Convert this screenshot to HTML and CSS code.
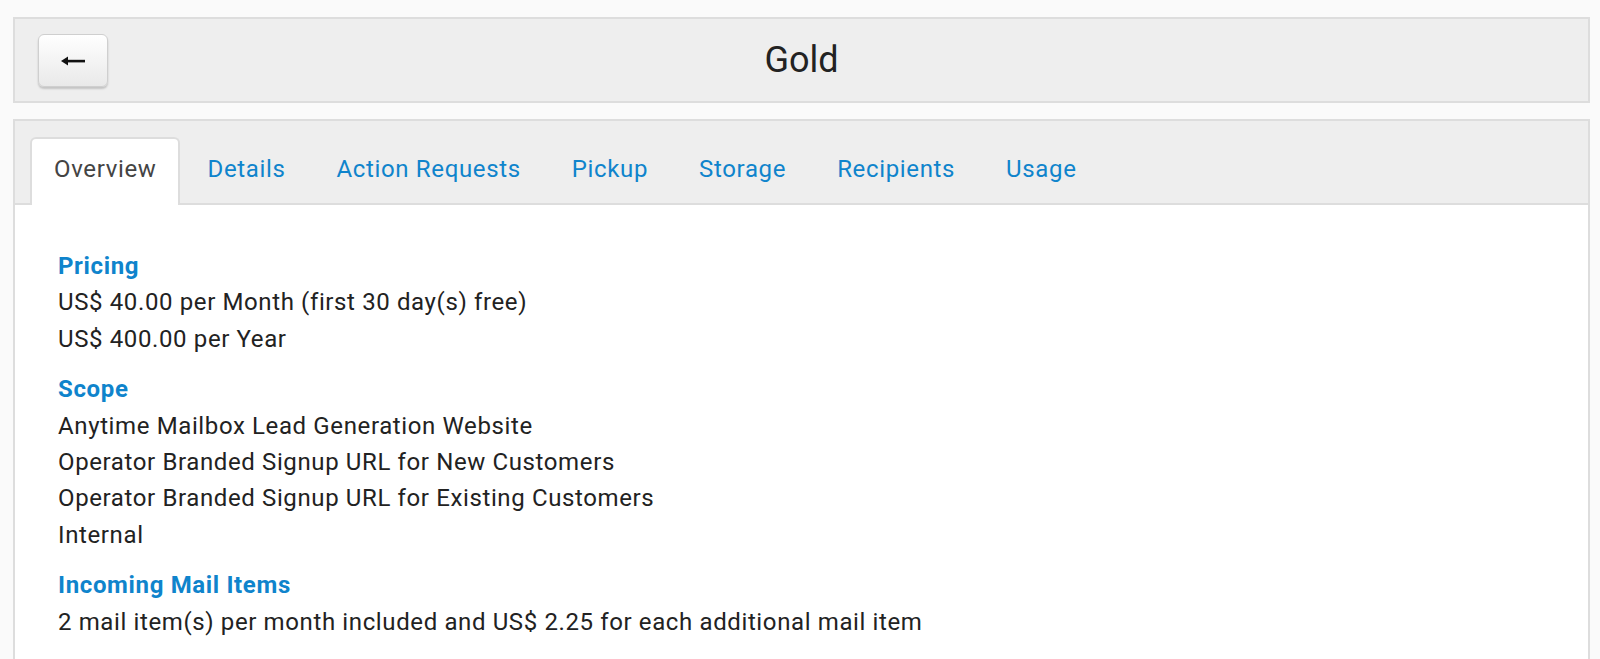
FILE: index.html
```html
<!DOCTYPE html>
<html>
<head>
<meta charset="utf-8">
<link rel="stylesheet" href="styles.css">
</head>
<body>
<div class="page">
  <div class="header">
    <button class="back-btn" type="button" aria-label="Back">
      <svg width="26" height="12" viewBox="0 0 26 12">
        <path d="M1 6 L8 1.5 L8 10.5 Z" fill="#111"/>
        <rect x="6" y="4.8" width="19" height="2.6" fill="#111"/>
      </svg>
    </button>
    <h1 class="title">Gold</h1>
    <div class="spacer"></div>
  </div>
  <div class="panel">
    <ul class="tabs">
      <li class="tab active">Overview</li>
      <li class="tab">Details</li>
      <li class="tab">Action Requests</li>
      <li class="tab">Pickup</li>
      <li class="tab">Storage</li>
      <li class="tab">Recipients</li>
      <li class="tab">Usage</li>
    </ul>
    <div class="content">
      <div class="section">
        <div class="label">Pricing</div>
        <div class="line">US$ 40.00 per Month (first 30 day(s) free)</div>
        <div class="line">US$ 400.00 per Year</div>
      </div>
      <div class="section">
        <div class="label">Scope</div>
        <div class="line">Anytime Mailbox Lead Generation Website</div>
        <div class="line">Operator Branded Signup URL for New Customers</div>
        <div class="line">Operator Branded Signup URL for Existing Customers</div>
        <div class="line">Internal</div>
      </div>
      <div class="section">
        <div class="label">Incoming Mail Items</div>
        <div class="line">2 mail item(s) per month included and US$ 2.25 for each additional mail item</div>
      </div>
    </div>
  </div>
</div>
</body>
</html>
```

FILE: styles.css
```css
html, body {
  margin: 0;
  padding: 0;
  background: #fafafa;
  font-family: Roboto, "Liberation Sans", Arial, sans-serif;
  color: #222;
}
.page {
  padding: 17px 10px 0 13px;
  height: 642px;
  overflow: hidden;
}
.header {
  height: 82px;
  border: 2px solid #dddddd;
  background: #eeeeee;
  display: flex;
  align-items: center;
  padding: 0 23px;
}
.back-btn {
  width: 70px;
  height: 53px;
  border: 1px solid #cfcfcf;
  border-radius: 6px;
  background: linear-gradient(#ffffff, #e9e9e9);
  box-shadow: 0 2px 2px rgba(0,0,0,0.18);
  display: flex;
  align-items: center;
  justify-content: center;
  padding: 0;
  margin-top: 1px;
}
.title {
  flex: 1;
  text-align: center;
  margin: 0;
  font-weight: 400;
  font-size: 36px;
  color: #222;
  letter-spacing: 0;
}
.spacer {
  width: 70px;
}
.panel {
  margin-top: 16px;
  border: 2px solid #dddddd;
  border-bottom: none;
  background: #ffffff;
  height: 600px;
}
.tabs {
  list-style: none;
  margin: 0;
  padding: 16px 0 0 15px;
  background: #eeeeee;
  border-bottom: 2px solid #dddddd;
  display: flex;
  height: 66px;
}
.tab {
  font-size: 24px;
  letter-spacing: 0.65px;
  color: #0f84cc;
  padding: 0 22px;
  margin-right: 3px;
  margin-bottom: -2px;
  height: 64px;
  line-height: 60px;
  border: 2px solid transparent;
  border-bottom: none;
  border-radius: 6px 6px 0 0;
}
.tab.active {
  background: #ffffff;
  border-color: #dddddd;
  color: #444;
  height: 66px;
}
.content {
  padding: 43px 43px 0 43px;
}
.section {
  margin-bottom: 14.5px;
}
.label {
  font-size: 24px;
  line-height: 36.3px;
  font-weight: 700;
  letter-spacing: 0.65px;
  color: #0f84cc;
}
.line {
  font-size: 24px;
  line-height: 36.3px;
  letter-spacing: 0.62px;
  color: #222;
}
```
